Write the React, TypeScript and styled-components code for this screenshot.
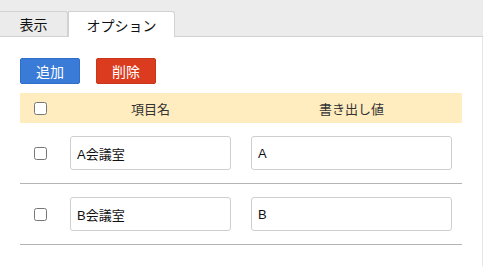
import React from "react";
import styled, { createGlobalStyle } from "styled-components";

const GlobalStyle = createGlobalStyle`
  body {
    margin: 0;
    background: #fff;
    font-family: "Liberation Sans", "Noto Sans CJK JP", sans-serif;
    color: #222;
  }
`;

const Page = styled.div`
  width: 483px;
  height: 266px;
  overflow: hidden;
`;

const TabBar = styled.div`
  display: flex;
  align-items: flex-end;
  height: 25px;
  padding-top: 11px;
  background: #ececec;
  border-bottom: 1px solid #d2d2d2;
`;

const Tab = styled.div<{ active?: boolean; w: number }>`
  box-sizing: border-box;
  width: ${({ w }) => w}px;
  height: ${({ active }) => (active ? 26 : 25)}px;
  margin-bottom: ${({ active }) => (active ? -1 : 0)}px;
  display: flex;
  align-items: center;
  justify-content: center;
  font-size: 14px;
  color: #111;
  background: ${({ active }) => (active ? "#fff" : "#ebebeb")};
  border: 1px solid #d2d2d2;
  border-bottom: none;
  border-left: ${({ active }) => (active ? "1px solid #d2d2d2" : "none")};
  border-radius: 0 3px 0 0;
`;

const Panel = styled.div`
  box-sizing: border-box;
  height: 229px;
  padding: 21px 20px 0 20px;
  border-right: 1px solid #e6e6e6;
`;

const Toolbar = styled.div`
  display: flex;
  gap: 16px;
  margin-bottom: 9px;
`;

const ActionButton = styled.button<{ tone: "blue" | "red" }>`
  width: 60px;
  height: 26px;
  border: 1px solid ${({ tone }) => (tone === "blue" ? "#2f6fcb" : "#c9351a")};
  border-radius: 2px;
  background: ${({ tone }) => (tone === "blue" ? "#3a7bd8" : "#db3b1f")};
  color: #fff;
  font-family: inherit;
  font-size: 14px;
  padding: 0;
`;

const Grid = styled.div`
  display: grid;
  grid-template-columns: 40px 181px 1fr;
`;

const HeadCell = styled.div`
  height: 30px;
  background: #ffecbf;
  display: flex;
  align-items: center;
  justify-content: center;
  font-size: 13px;
  color: #333;
`;

const Cell = styled.div`
  height: 60px;
  border-bottom: 1px solid #b4b4b4;
  display: flex;
  align-items: center;
  justify-content: center;
  padding: 0 10px;
`;

const CheckCell = styled(Cell)`
  padding: 0;
`;

const Check = styled.input.attrs({ type: "checkbox" })`
  width: 13px;
  height: 13px;
  margin: 0;
`;

const TextField = styled.input<{ w: number }>`
  box-sizing: border-box;
  width: ${({ w }) => w}px;
  height: 34px;
  border: 1px solid #cfcfcf;
  border-radius: 3px;
  padding: 0 6px;
  font-family: "Liberation Sans", "Noto Sans CJK JP", sans-serif;
  font-size: 13px;
  color: #111;
  outline: none;
  margin-right: auto;
`;

const rows = [
  { name: "A会議室", value: "A" },
  { name: "B会議室", value: "B" },
];

export default function App() {
  return (
    <Page>
      <GlobalStyle />
      <TabBar>
        <Tab w={68}>表示</Tab>
        <Tab w={107} active>
          オプション
        </Tab>
      </TabBar>
      <Panel>
        <Toolbar>
          <ActionButton tone="blue">追加</ActionButton>
          <ActionButton tone="red">削除</ActionButton>
        </Toolbar>
        <Grid>
          <HeadCell>
            <Check />
          </HeadCell>
          <HeadCell>項目名</HeadCell>
          <HeadCell>書き出し値</HeadCell>
          {rows.map(r => (
            <React.Fragment key={r.name}>
              <CheckCell>
                <Check />
              </CheckCell>
              <Cell>
                <TextField w={161} defaultValue={r.name} />
              </Cell>
              <Cell>
                <TextField w={201} defaultValue={r.value} />
              </Cell>
            </React.Fragment>
          ))}
        </Grid>
      </Panel>
    </Page>
  );
}
